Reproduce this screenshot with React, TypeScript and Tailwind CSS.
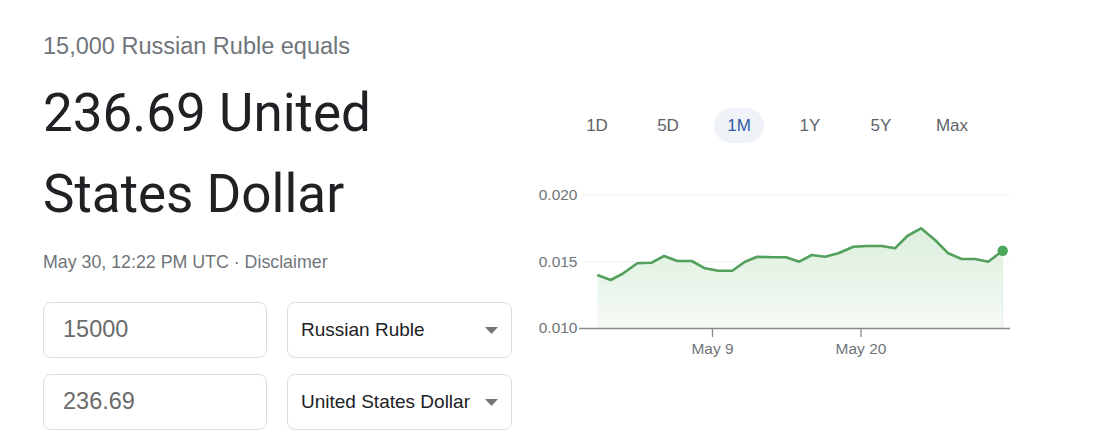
const TABS = ["1D", "5D", "1M", "1Y", "5Y", "Max"];

const POINTS: [number, number][] = [
  [597.3, 275], [610.7, 280], [623.3, 273.3], [637.3, 263.3], [651.7, 262.7],
  [664, 256], [677.3, 261], [691.7, 261], [705, 268.3], [718.3, 270.7],
  [732.3, 270.7], [745, 261.7], [757.3, 256.7], [771.7, 257.3], [786, 257.3],
  [799.3, 261.7], [811.7, 255], [825, 256.7], [838.3, 253.3], [853.3, 246.7],
  [867.3, 246], [881.7, 246], [895, 248.3], [907.3, 236], [921, 228.3],
  [935, 240], [948.3, 253.3], [961.7, 259], [975, 259], [988.3, 261.7],
  [1002.7, 250.7],
];

function Caret() {
  return (
    <svg width="13" height="7" viewBox="0 0 13 7" className="shrink-0">
      <path d="M0 0h13L6.5 7z" fill="#757575" />
    </svg>
  );
}

function AmountBox({ value }: { value: string }) {
  return (
    <div className="flex h-[56px] w-[224px] items-center rounded-[8px] border border-[#dadce0] pl-[19px] text-[23.5px] text-[#6b6b6b]">
      {value}
    </div>
  );
}

function CurrencySelect({ label }: { label: string }) {
  return (
    <div className="flex h-[56px] w-[225px] items-center justify-between rounded-[8px] border border-[#dadce0] pl-[13px] pr-[13px] text-[19px] text-[#202124]">
      <span>{label}</span>
      <Caret />
    </div>
  );
}

function RateChart() {
  const line = POINTS.map(([x, y], i) => `${i ? "L" : "M"}${x} ${y}`).join(" ");
  const first = POINTS[0];
  const last = POINTS[POINTS.length - 1];
  const area = `${line} L${last[0]} 328.5 L${first[0]} 328.5 Z`;

  return (
    <svg
      width="490"
      height="180"
      viewBox="530 180 490 180"
      style={{ fontFamily: '"Liberation Sans", Arial, sans-serif' }}
    >
      <defs>
        <linearGradient id="fill" x1="0" y1="0" x2="0" y2="1">
          <stop offset="0%" stopColor="#dcefdd" />
          <stop offset="100%" stopColor="#f5faf5" />
        </linearGradient>
      </defs>
      <line x1="583" x2="1010" y1="195" y2="195" stroke="#f0f0f0" strokeWidth="1" />
      <line x1="583" x2="1010" y1="262" y2="262" stroke="#f0f0f0" strokeWidth="1" />
      <path d={area} fill="url(#fill)" />
      <line x1={last[0]} x2={last[0]} y1={last[1]} y2="328" stroke="#e6efe6" strokeWidth="1" />
      <path d={line} fill="none" stroke="#52a05b" strokeWidth="2.6" strokeLinejoin="round" />
      <circle cx={last[0]} cy={last[1]} r="5.2" fill="#4da759" />
      <line x1="579" x2="1010" y1="328.5" y2="328.5" stroke="#8a8a8a" strokeWidth="1.3" />
      <line x1="712.5" x2="712.5" y1="328.5" y2="337" stroke="#8a8a8a" strokeWidth="1.3" />
      <line x1="861" x2="861" y1="328.5" y2="337" stroke="#8a8a8a" strokeWidth="1.3" />
      <g fill="#70757a" fontSize="15.5">
        <text x="577.5" y="200" textAnchor="end">0.020</text>
        <text x="577.5" y="266.5" textAnchor="end">0.015</text>
        <text x="577.5" y="333" textAnchor="end">0.010</text>
        <text x="712.5" y="353.5" textAnchor="middle">May 9</text>
        <text x="861" y="353.5" textAnchor="middle">May 20</text>
      </g>
    </svg>
  );
}

export default function App() {
  return (
    <div className="flex h-[439px] w-[1101px] bg-white font-['Liberation_Sans',Arial,sans-serif]">
      <div className="flex w-[530px] flex-col pl-[43px]">
        <div className="mt-[32px] text-[23.5px] leading-[28px] text-[#70757a]">
          15,000 Russian Ruble equals
        </div>
        <div className="mt-[13px] font-['Roboto',sans-serif] text-[53px] leading-[81px] text-[#202124]">
          <div>236.69 United</div>
          <div>States Dollar</div>
        </div>
        <div className="mt-[17px] text-[17.8px] leading-[20px] text-[#70757a]">
          May 30, 12:22 PM UTC · Disclaimer
        </div>
        <div className="mt-[30px] flex flex-col gap-[16px]">
          <div className="flex gap-[20px]">
            <AmountBox value="15000" />
            <CurrencySelect label="Russian Ruble" />
          </div>
          <div className="flex gap-[20px]">
            <AmountBox value="236.69" />
            <CurrencySelect label="United States Dollar" />
          </div>
        </div>
      </div>
      <div className="flex flex-col">
        <div className="ml-[31.5px] mt-[108px] flex">
          {TABS.map((tab) => (
            <div key={tab} className="flex h-[35px] w-[71px] items-center justify-center">
              {tab === "1M" ? (
                <span className="flex h-[35px] w-[50px] items-center justify-center rounded-full bg-[#eff3f8] text-[17px] text-[#2f5aa6]">
                  {tab}
                </span>
              ) : (
                <span className="text-[17px] text-[#5f6368]">{tab}</span>
              )}
            </div>
          ))}
        </div>
        <div className="mt-[37px]">
          <RateChart />
        </div>
      </div>
    </div>
  );
}
